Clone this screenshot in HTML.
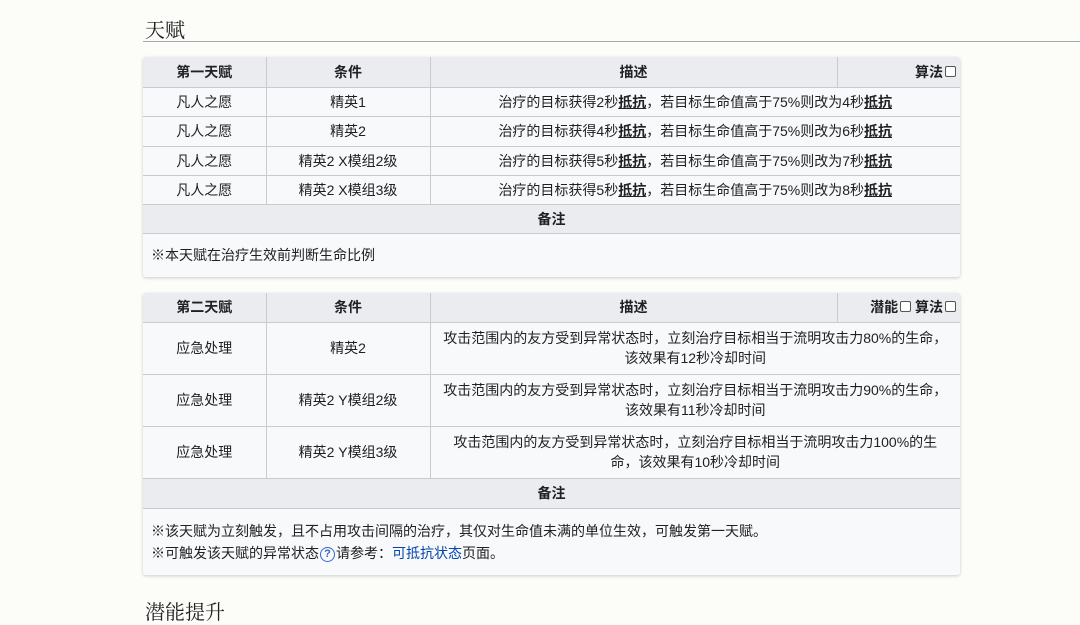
<!DOCTYPE html>
<html><head><meta charset="utf-8"><style>
body{margin:0;width:1080px;height:617px;overflow:hidden;background:#fcfcf9;font-family:"Liberation Sans","Noto Sans CJK SC",sans-serif;font-size:14px;color:#202122;position:relative}
h2{position:absolute;margin:0;font-family:"Liberation Serif","Noto Serif CJK SC",serif;font-weight:normal;font-size:20px;left:145px}
.line{position:absolute;left:143px;right:0;top:41px;height:1px;background:#a2a9b1}
.wrap{position:absolute;left:143px;width:817px;border-radius:3px;box-shadow:0 1px 3px rgba(0,0,0,.2);background:#f8f9fa;overflow:hidden}
table{border-collapse:collapse;width:817px;table-layout:fixed}
td,th{border:1px solid #c8ccd1;text-align:center;padding:0 4px;line-height:20px}
th{background:#eaecf0;font-weight:bold}
tr:first-child th{border-top:none}
td:first-child,th:first-child{border-left:none}
td:last-child,th:last-child{border-right:none}
td{background:#f8f9fa}
.r{text-align:right}
.note{text-align:left;padding:0 8px;border-bottom:none}
b{text-decoration:underline}
.cb{display:inline-block;width:9px;height:9px;border:1px solid #555;border-radius:2px;vertical-align:0px;margin-left:2px;background:#fff}
a{color:#0645ad;text-decoration:none}
.q{display:inline-block;width:13px;height:13px;border:1.3px solid #36c;border-radius:50%;color:#36c;font-size:11px;line-height:13px;text-align:center;vertical-align:1px;font-weight:bold;margin:0 1px}
</style></head><body>
<h2 style="top:14px">天赋</h2>
<div class="line"></div>
<div class="wrap" style="top:57px">
<table>
<colgroup><col style="width:123px"><col style="width:164px"><col style="width:407px"><col style="width:123px"></colgroup>
<tr style="height:30px"><th>第一天赋</th><th>条件</th><th>描述</th><th class="r">算法<span class="cb"></span></th></tr>
<tr style="height:29px"><td>凡人之愿</td><td>精英1</td><td colspan="2">治疗的目标获得2秒<b>抵抗</b>，若目标生命值高于75%则改为4秒<b>抵抗</b></td></tr>
<tr style="height:30px"><td>凡人之愿</td><td>精英2</td><td colspan="2">治疗的目标获得4秒<b>抵抗</b>，若目标生命值高于75%则改为6秒<b>抵抗</b></td></tr>
<tr style="height:29px"><td>凡人之愿</td><td>精英2 X模组2级</td><td colspan="2">治疗的目标获得5秒<b>抵抗</b>，若目标生命值高于75%则改为7秒<b>抵抗</b></td></tr>
<tr style="height:29px"><td>凡人之愿</td><td>精英2 X模组3级</td><td colspan="2">治疗的目标获得5秒<b>抵抗</b>，若目标生命值高于75%则改为8秒<b>抵抗</b></td></tr>
<tr style="height:29px"><th colspan="4">备注</th></tr>
<tr style="height:44px"><td colspan="4" class="note">※本天赋在治疗生效前判断生命比例</td></tr>
</table></div>
<div class="wrap" style="top:293px">
<table>
<colgroup><col style="width:123px"><col style="width:164px"><col style="width:407px"><col style="width:123px"></colgroup>
<tr style="height:29px"><th>第二天赋</th><th>条件</th><th>描述</th><th class="r">潜能<span class="cb"></span> 算法<span class="cb"></span></th></tr>
<tr style="height:52px"><td>应急处理</td><td>精英2</td><td colspan="2">攻击范围内的友方受到异常状态时，立刻治疗目标相当于流明攻击力80%的生命，<br>该效果有12秒冷却时间</td></tr>
<tr style="height:52px"><td>应急处理</td><td>精英2 Y模组2级</td><td colspan="2">攻击范围内的友方受到异常状态时，立刻治疗目标相当于流明攻击力90%的生命，<br>该效果有11秒冷却时间</td></tr>
<tr style="height:52px"><td>应急处理</td><td>精英2 Y模组3级</td><td colspan="2">攻击范围内的友方受到异常状态时，立刻治疗目标相当于流明攻击力100%的生<br>命，该效果有10秒冷却时间</td></tr>
<tr style="height:30px"><th colspan="4">备注</th></tr>
<tr style="height:67px"><td colspan="4" class="note" style="line-height:22px">※该天赋为立刻触发，且不占用攻击间隔的治疗，其仅对生命值未满的单位生效，可触发第一天赋。<br>※可触发该天赋的异常状态<span class="q">?</span>请参考：<a>可抵抗状态</a>页面。</td></tr>
</table></div>
<h2 style="top:596px">潜能提升</h2>
</body></html>
